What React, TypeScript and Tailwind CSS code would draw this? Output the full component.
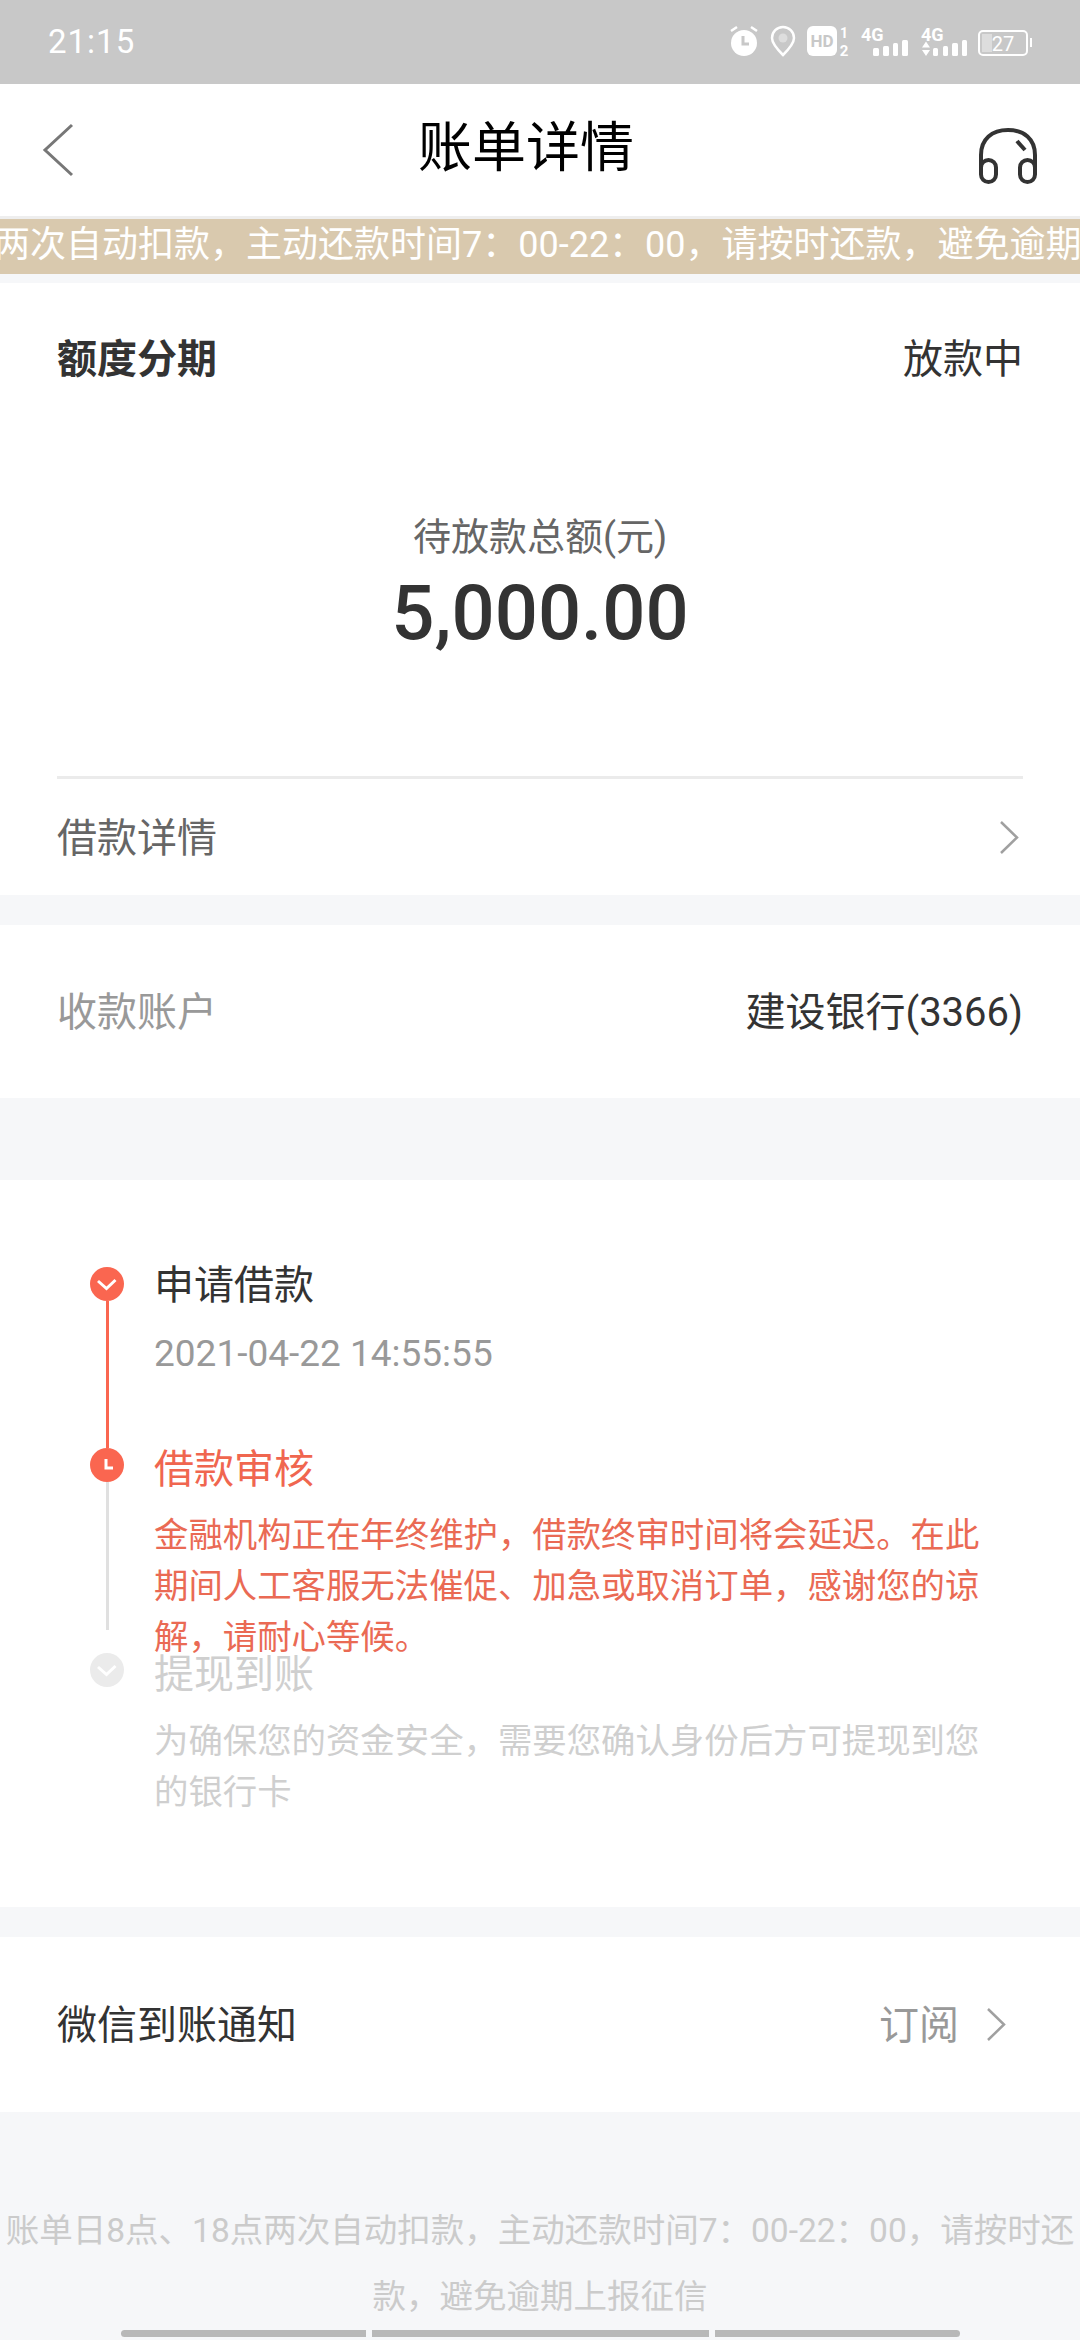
const font = { fontFamily: 'Roboto, "Noto Sans CJK SC", "Noto Sans", sans-serif' };

function StatusIcons() {
  return (
    <svg width="304" height="34" viewBox="730 26 304 34" fill="none">
      {/* alarm */}
      <circle cx="744" cy="44" r="13" fill="#fff" />
      <path d="M743 37v8h6" stroke="#c8c8c8" strokeWidth="3" />
      <path d="M731 32l6-4M757 32l-6-4" stroke="#fff" strokeWidth="2.5" />
      {/* location */}
      <path d="M783 56c-7-7-11-12-11-17a11 11 0 0 1 22 0c0 5-4 10-11 17z" stroke="#fff" strokeWidth="2.5" />
      <circle cx="783" cy="39" r="4.5" fill="#ddd" />
      {/* hd */}
      <rect x="807" y="27" width="30" height="30" rx="6" fill="#fff" />
      <text x="822" y="48" textAnchor="middle" fontSize="17" fontWeight="700" fill="#c8c8c8" fontFamily="Roboto">HD</text>
      <text x="844" y="39" textAnchor="middle" fontSize="14" fontWeight="700" fill="#fff" fontFamily="Roboto">1</text>
      <text x="844" y="57" textAnchor="middle" fontSize="15" fontWeight="700" fill="#fff" fontFamily="Roboto">2</text>
      {/* first sim */}
      <text x="861" y="42" fontSize="18" fontWeight="700" fill="#fff" fontFamily="Roboto">4G</text>
      <rect x="873" y="49" width="6" height="8" rx="1.5" fill="#fff" />
      <rect x="883" y="47" width="6" height="10" rx="1.5" fill="#fff" />
      <rect x="893" y="44" width="5" height="13" rx="1.5" fill="#fff" />
      <rect x="902" y="41" width="6" height="16" rx="1.5" fill="#fff" />
      {/* second sim */}
      <text x="921" y="42" fontSize="18" fontWeight="700" fill="#fff" fontFamily="Roboto">4G</text>
      <path d="M922 48.5l4-6 4 6zM922 51h8l-4 6z" fill="#fff" />
      <rect x="933" y="49" width="5" height="8" rx="1.5" fill="#fff" />
      <rect x="943" y="47" width="5" height="10" rx="1.5" fill="#fff" />
      <rect x="952" y="44" width="6" height="13" rx="1.5" fill="#fff" />
      <rect x="962" y="41" width="5" height="16" rx="1.5" fill="#fff" />
      {/* battery */}
      <rect x="979" y="32" width="48" height="24" rx="4" stroke="#fff" strokeWidth="2" />
      <rect x="982" y="35" width="10" height="18" fill="#ddd" />
      <text x="1003" y="52" textAnchor="middle" fontSize="20" fill="#fff" fontFamily="Roboto">27</text>
      <rect x="1030" y="39" width="2" height="9" fill="#fff" />
    </svg>
  );
}

function StepDot({ kind }: { kind: 'done' | 'clock' | 'todo' }) {
  const fill = kind === 'todo' ? '#ebebeb' : '#fa6650';
  return (
    <svg width="34" height="34" viewBox="0 0 34 34" className="shrink-0">
      <circle cx="17" cy="17" r="17" fill={fill} />
      {kind === 'clock' ? (
        <path d="M16 11v9h7" stroke="#fff" strokeWidth="3" fill="none" />
      ) : (
        <path d="M8 14l8.5 7.5L25.500 13" stroke="#fff" strokeWidth="3" fill="none" />
      )}
    </svg>
  );
}

function Chevron() {
  return (
    <svg width="20" height="35" viewBox="0 0 20 35" fill="none" className="shrink-0">
      <path d="M2 2l16 15.5L2 33" stroke="#a0a0a0" strokeWidth="2.5" />
    </svg>
  );
}

export default function App() {
  return (
    <div className="w-[1080px] h-[2340px] overflow-hidden bg-[#f6f7f9] flex flex-col" style={font}>
      {/* Status bar */}
      <div className="h-[84px] bg-[#c8c8c8] flex items-center justify-between pl-[48px] pr-[46px] text-white shrink-0">
        <span className="text-[33px] tracking-[1px]">21:15</span>
        <StatusIcons />
      </div>

      {/* Header */}
      <div className="h-[132px] bg-white flex items-center justify-between pl-[42px] pr-[42px] shrink-0">
        <svg width="32" height="54" viewBox="0 0 32 54" fill="none">
          <path d="M30 2L3 27l27 25" stroke="#777" strokeWidth="3" />
        </svg>
        <span className="text-[54px] leading-none text-black mb-[2px]">账单详情</span>
        <svg width="60" height="58" viewBox="0 0 60 58" fill="none" className="mt-[11px]">
          <path d="M3 42V28C3 12 14 3 30 3s27 9 27 25v14" stroke="#333" strokeWidth="4" />
          <path d="M39 14l8 9" stroke="#333" strokeWidth="4" />
          <rect x="3" y="33" width="15" height="22" rx="7.5" stroke="#333" strokeWidth="4" />
          <rect x="42" y="33" width="15" height="22" rx="7.5" stroke="#333" strokeWidth="4" />
        </svg>
      </div>

      {/* Marquee */}
      <div className="h-[3px] bg-[#eeeeee] shrink-0" />
      <div className="h-[55px] bg-[#d9c9ae] flex items-center overflow-hidden whitespace-nowrap text-white text-[36px] leading-none pb-[4px] shrink-0">
        <span className="-ml-[6px]">两次自动扣款，主动还款时间7：00-22：00，请按时还款，避免逾期上报征信</span>
      </div>
      <div className="h-[9px] shrink-0" />

      {/* Summary */}
      <section className="h-[612px] bg-white px-[57px] flex flex-col shrink-0">
        <div className="flex justify-between items-center pt-[47px] text-[40px] leading-[60px]">
          <span className="font-bold text-[#333]">额度分期</span>
          <span className="text-[#333]">放款中</span>
        </div>
        <div className="flex flex-col items-center mt-[122px]">
          <span className="text-[38px] leading-[50px] text-[#666]">待放款总额(元)</span>
          <span className="mt-[1px] text-[76px] leading-[100px] font-medium text-[#333]">5,000.00</span>
        </div>
        <div className="mt-auto h-[119px] border-t-[3px] border-[#ebebeb] flex items-center justify-between">
          <span className="text-[40px] text-[#666] pt-[3px]">借款详情</span>
          <div className="mr-[4px]">
            <Chevron />
          </div>
        </div>
      </section>

      <div className="h-[30px] shrink-0" />

      {/* Account */}
      <section className="h-[173px] bg-white px-[57px] pt-[3px] flex items-center justify-between shrink-0 text-[40px]">
        <span className="text-[#999]">收款账户</span>
        <span className="text-[#333]">建设银行(3366)</span>
      </section>

      <div className="h-[82px] shrink-0" />

      {/* Timeline */}
      <section className="h-[727px] bg-white pl-[90px] pr-[70px] pt-[87px] shrink-0">
        <div className="flex h-[181px] gap-[30px]">
          <div className="w-[34px] flex flex-col items-center">
            <StepDot kind="done" />
            <div className="w-[3px] flex-1 bg-[#fa6650]" />
          </div>
          <div className="pt-[2px]">
            <div className="text-[40px] leading-[34px] text-[#333]">申请借款</div>
            <div className="mt-[26px] text-[37px] leading-[50px] text-[#999]">2021-04-22 14:55:55</div>
          </div>
        </div>
        <div className="flex h-[205px] gap-[30px]">
          <div className="w-[34px] flex flex-col items-center">
            <StepDot kind="clock" />
            <div className="w-[3px] h-[148px] bg-[#e0e0e0]" />
          </div>
          <div className="pt-[5px]">
            <div className="text-[40px] leading-[34px] text-[#f0664f]">借款审核</div>
            <div className="mt-[23px] text-[34.4px] leading-[51px] text-[#ea6a54]">
              金融机构正在年终维护，借款终审时间将会延迟。在此期间人工客服无法催促、加急或取消订单，感谢您的谅解，请耐心等候。
            </div>
          </div>
        </div>
        <div className="flex gap-[30px]">
          <StepDot kind="todo" />
          <div className="pt-[5px]">
            <div className="text-[40px] leading-[34px] text-[#cfcfcf]">提现到账</div>
            <div className="mt-[24px] text-[34.4px] leading-[51px] text-[#cfcfcf]">
              为确保您的资金安全，需要您确认身份后方可提现到您的银行卡
            </div>
          </div>
        </div>
      </section>

      <div className="h-[30px] shrink-0" />

      {/* WeChat notice */}
      <section className="h-[175px] bg-white pl-[57px] pr-[74px] flex items-center justify-between shrink-0">
        <span className="text-[40px] text-[#333] pt-[3px]">微信到账通知</span>
        <span className="flex items-center gap-[27px] text-[40px] text-[#999]">
          <span className="pt-[3px]">订阅</span>
          <Chevron />
        </span>
      </section>

      {/* Footer note */}
      <div className="px-[4px] pt-[86px] text-center text-[33.5px] leading-[66px] text-[#cbcbcb]">
        账单日8点、18点两次自动扣款，主动还款时间7：00-22：00，请按时还款，避免逾期上报征信
      </div>

      {/* Nav indicator */}
      <div className="mt-auto mb-[3px] flex justify-center gap-[6px]">
        <div className="w-[245px] h-[7px] bg-[#b8b8b8] rounded-l-full" />
        <div className="w-[337px] h-[7px] bg-[#b8b8b8]" />
        <div className="w-[245px] h-[7px] bg-[#b8b8b8] rounded-r-full" />
      </div>
    </div>
  );
}
